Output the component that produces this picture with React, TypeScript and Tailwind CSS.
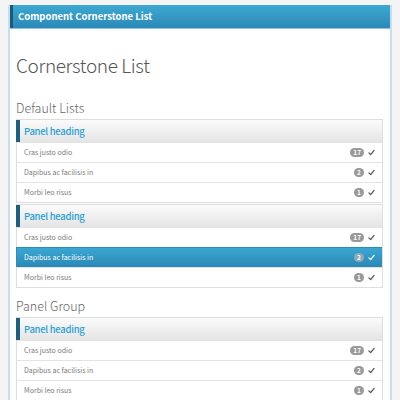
import React from 'react';

type Item = { label: string; count: number };

const items: Item[] = [
  { label: 'Cras justo odio', count: 17 },
  { label: 'Dapibus ac facilisis in', count: 2 },
  { label: 'Morbi leo risus', count: 1 },
];

function Check({ active }: { active?: boolean }) {
  return (
    <svg viewBox="0 0 10 10" className="w-[7px] h-[7px]">
      <path
        d="M1.3 5.6 L3.8 8.1 L8.7 2"
        fill="none"
        stroke={active ? '#ffffff' : '#555555'}
        strokeWidth="1.8"
        strokeLinecap="round"
        strokeLinejoin="round"
      />
    </svg>
  );
}

function Panel({ activeIndex }: { activeIndex?: number }) {
  return (
    <div className="border border-[#dedede] border-l-0 bg-white">
      <div className="h-[22px] flex items-center border-l-4 border-[#1c5f7e] bg-gradient-to-b from-[#fbfbfb] to-[#e4e4e4] pl-[4px]">
        <span className="text-[9.5px] font-medium tracking-[-0.03em] text-[#2a9fd6]">Panel heading</span>
      </div>
      {items.map((item, i) => {
        const active = i === activeIndex;
        return (
          <div
            key={item.label}
            className={
              active
                ? 'h-[20px] flex items-center justify-between border-l border-t border-[#2b8cbb] bg-gradient-to-b from-[#3aa7d2] to-[#2a88b6] pl-[7px] pr-[7px]'
                : 'h-[20px] flex items-center justify-between border-l border-t border-[#e3e3e3] border-l-[#dedede] pl-[7px] pr-[7px]'
            }
          >
            <span className={active ? 'text-[7px] text-white' : 'text-[7px] text-[#7a7a7a]'}>{item.label}</span>
            <div className="flex items-center gap-[4px]">
              <span
                className={
                  active
                    ? 'h-[9px] min-w-[10px] px-[3px] rounded-full bg-[#8fa9b8] text-white text-[6.5px] font-bold leading-[9px] text-center'
                    : 'h-[9px] min-w-[10px] px-[3px] rounded-full bg-[#999999] text-white text-[6.5px] font-bold leading-[9px] text-center'
                }
              >
                {item.count}
              </span>
              <Check active={active} />
            </div>
          </div>
        );
      })}
    </div>
  );
}

export default function App() {
  return (
    <div className="h-[400px] overflow-hidden bg-[#f4f4f4] pt-[5px] px-[8px]" style={{ fontFamily: '"Noto Sans CJK KR", "Noto Sans", sans-serif' }}>
      <div className="bg-white border-l-2 border-r-2 border-[#c9dcf0] min-h-[400px]">
        <div className="h-[23px] flex items-center border-l-[3px] border-[#1b5a78] bg-gradient-to-b from-[#3ca9d3] to-[#2b89b7] pl-[5px] shadow-[0_1px_0_#8cc3de]">
          <span className="text-[9.5px] font-semibold text-white">Component Cornerstone List</span>
        </div>
        <div className="pl-[6px] pr-[7px]">
          <h1 className="text-[19px] font-light tracking-[-0.02em] text-[#555] leading-[21px] mt-[26px]">Cornerstone List</h1>
          <h2 className="text-[12.5px] font-light text-[#666] leading-[14px] mt-[26px] mb-[4px]">Default Lists</h2>
          <Panel />
          <div className="h-[1px]" />
          <Panel activeIndex={1} />
          <h2 className="text-[12.5px] font-light text-[#666] leading-[14px] mt-[11px] mb-[4px]">Panel Group</h2>
          <Panel />
        </div>
      </div>
    </div>
  );
}
